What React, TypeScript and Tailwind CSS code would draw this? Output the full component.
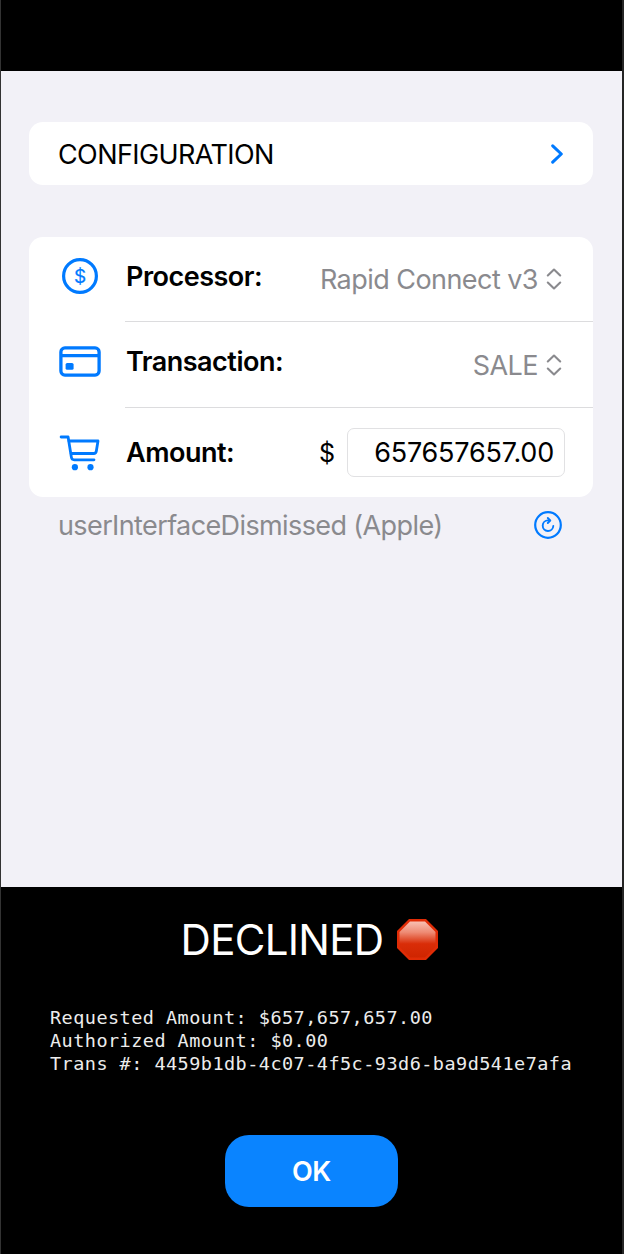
import React from "react";

const Chevrons = () => (
  <svg width="16" height="22" viewBox="0 0 16 22" fill="none" stroke="#8a8a8e" strokeWidth="2.1" strokeLinecap="round" strokeLinejoin="round">
    <path d="M1.8 7.5 8 1.5 14.2 7.5M1.8 14.5 8 20.5 14.2 14.5" />
  </svg>
);

const DollarCircle = () => (
  <svg width="36" height="36" viewBox="0 0 36 36" fill="none">
    <circle cx="18" cy="18" r="16.4" stroke="#007aff" strokeWidth="3.2" />
    <text x="18" y="25" textAnchor="middle" fontSize="19" fill="#007aff" stroke="#007aff" strokeWidth="0.2" className="font-['Inter',sans-serif]">$</text>
  </svg>
);

const Card = () => (
  <svg width="42" height="31" viewBox="0 0 42 31" fill="none">
    <rect x="1.9" y="1.9" width="38.2" height="27.2" rx="4" stroke="#007aff" strokeWidth="3.3" />
    <path d="M2 9.7H40" stroke="#007aff" strokeWidth="3.3" />
    <rect x="6.6" y="17" width="8" height="6.8" rx="1.6" fill="#007aff" />
  </svg>
);

const Cart = () => (
  <svg width="42" height="36" viewBox="0 0 42 36" fill="none" stroke="#007aff" strokeWidth="2.8" strokeLinecap="round" strokeLinejoin="round">
    <path d="M2.1 2H9.1L12.4 22.4Q12.8 24.8 15.2 24.8H35" />
    <path d="M10 6H39L37.3 16.3Q36.9 18.5 34.8 18.5H12.2" />
    <circle cx="15.9" cy="32.2" r="3.1" fill="#007aff" stroke="none" />
    <circle cx="31.5" cy="32.2" r="3.1" fill="#007aff" stroke="none" />
  </svg>
);

const Refresh = () => (
  <svg width="28" height="28" viewBox="0 0 28 28" fill="none" stroke="#007aff" strokeLinecap="round" strokeLinejoin="round">
    <circle cx="14" cy="14" r="12.8" strokeWidth="2.2" />
    <path d="M14.6 9.4H14A5.3 5.3 0 1 0 19.3 15" strokeWidth="1.9" />
    <path d="M13.8 7 16.3 9.5 13.8 12" strokeWidth="1.9" />
  </svg>
);

export default function App() {
  return (
    <div className="flex h-[1254px] w-[624px] flex-col overflow-hidden border-l border-r-2 border-l-[#333333] border-r-[#252525] bg-black font-['Inter',sans-serif] text-[27px] leading-8 text-black">
      <div className="h-[71px] shrink-0 bg-black" />
      <main className="flex h-[816px] shrink-0 flex-col bg-[#f2f1f7] pl-7 pr-7 pt-[51px]">
        <button className="flex h-[63px] w-[564px] items-center justify-between rounded-[14px] bg-white pl-[29px] pr-[29px]">
          <span className="pt-[2px] tracking-[-0.6px]">CONFIGURATION</span>
          <svg width="14" height="20" viewBox="0 0 14 20" fill="none" stroke="#007aff" strokeWidth="3" strokeLinecap="round" strokeLinejoin="round">
            <path d="M2.7 1.8 11.3 10 2.7 18.2" />
          </svg>
        </button>
        <section className="mt-[52px] flex h-[260px] w-[564px] flex-col rounded-[14px] bg-white">
          <div className="flex h-[85px]">
            <div className="w-[96px] pl-[33px] pt-[21px]"><DollarCircle /></div>
            <div className="flex flex-1 justify-between border-b border-[#dcdcde] pl-px pr-[31px]">
              <span className="pt-[24px] font-semibold tracking-[-0.5px]">Processor:</span>
              <span className="flex gap-2 pt-[27px] tracking-[-0.55px] text-[#8a8a8e]">Rapid Connect v3<span className="pt-[4px]"><Chevrons /></span></span>
            </div>
          </div>
          <div className="flex h-[86px]">
            <div className="w-[96px] pl-[30px] pt-[24px]"><Card /></div>
            <div className="flex flex-1 justify-between border-b border-[#dcdcde] pl-px pr-[31px]">
              <span className="pt-[24px] font-semibold tracking-[-0.5px]">Transaction:</span>
              <span className="flex gap-2 pt-[28px] tracking-[-0.55px] text-[#8a8a8e]">SALE<span className="pt-[4px]"><Chevrons /></span></span>
            </div>
          </div>
          <div className="flex h-[89px] items-center">
            <div className="w-[96px] pl-[30px]"><Cart /></div>
            <span className="flex-1 pl-px pt-px font-semibold tracking-[-0.5px]">Amount:</span>
            <span className="mr-[12px] text-[25px]">$</span>
            <div className="mr-[28px] flex h-[49px] w-[218px] items-center justify-end rounded-[7px] border border-[#e1e1e3] pr-[10px] pt-px tracking-[-0.2px]">657657657.00</div>
          </div>
        </section>
        <div className="flex h-[57px] items-center justify-between pl-[29px] pr-[32px]">
          <span className="tracking-[-0.61px] text-[#8a8a8e]">userInterfaceDismissed (Apple)</span>
          <span className="pb-px"><Refresh /></span>
        </div>
      </main>
      <footer className="flex flex-1 flex-col items-center bg-black text-white">
        <div className="mr-[3px] mt-[27px] flex h-[50px] items-center gap-[13px]">
          <h1 className="pt-px text-[42px] leading-[50px] tracking-[-0.7px]">DECLINED</h1>
          <svg width="43" height="43" viewBox="0 0 43 43">
            <defs>
              <linearGradient id="stop" x1="0" y1="0" x2="0" y2="1">
                <stop offset="0" stopColor="#f8c0b3" />
                <stop offset="0.3" stopColor="#ee8b74" />
                <stop offset="0.62" stopColor="#d92d08" />
                <stop offset="1" stopColor="#cf2500" />
              </linearGradient>
            </defs>
            <path d="M13 1H30L42 13V30L30 42H13L1 30V13Z" fill="#e02c06" />
            <path d="M14 3.5H29L39.5 14V29L29 39.5H14L3.5 29V14Z" fill="url(#stop)" />
          </svg>
        </div>
        <div className="mt-[42px] w-full whitespace-nowrap pl-[49px] font-['DejaVu_Sans_Mono',monospace] text-[18.5px] leading-[23px] tracking-[0.463px] text-[#ececec]">
          <p>Requested Amount: $657,657,657.00</p>
          <p>Authorized Amount: $0.00</p>
          <p>Trans #: 4459b1db-4c07-4f5c-93d6-ba9d541e7afa</p>
        </div>
        <button className="mt-[60px] h-[72px] w-[173px] rounded-[24px] bg-[#0a84ff] pt-px font-semibold tracking-[-0.3px]">OK</button>
      </footer>
    </div>
  );
}
